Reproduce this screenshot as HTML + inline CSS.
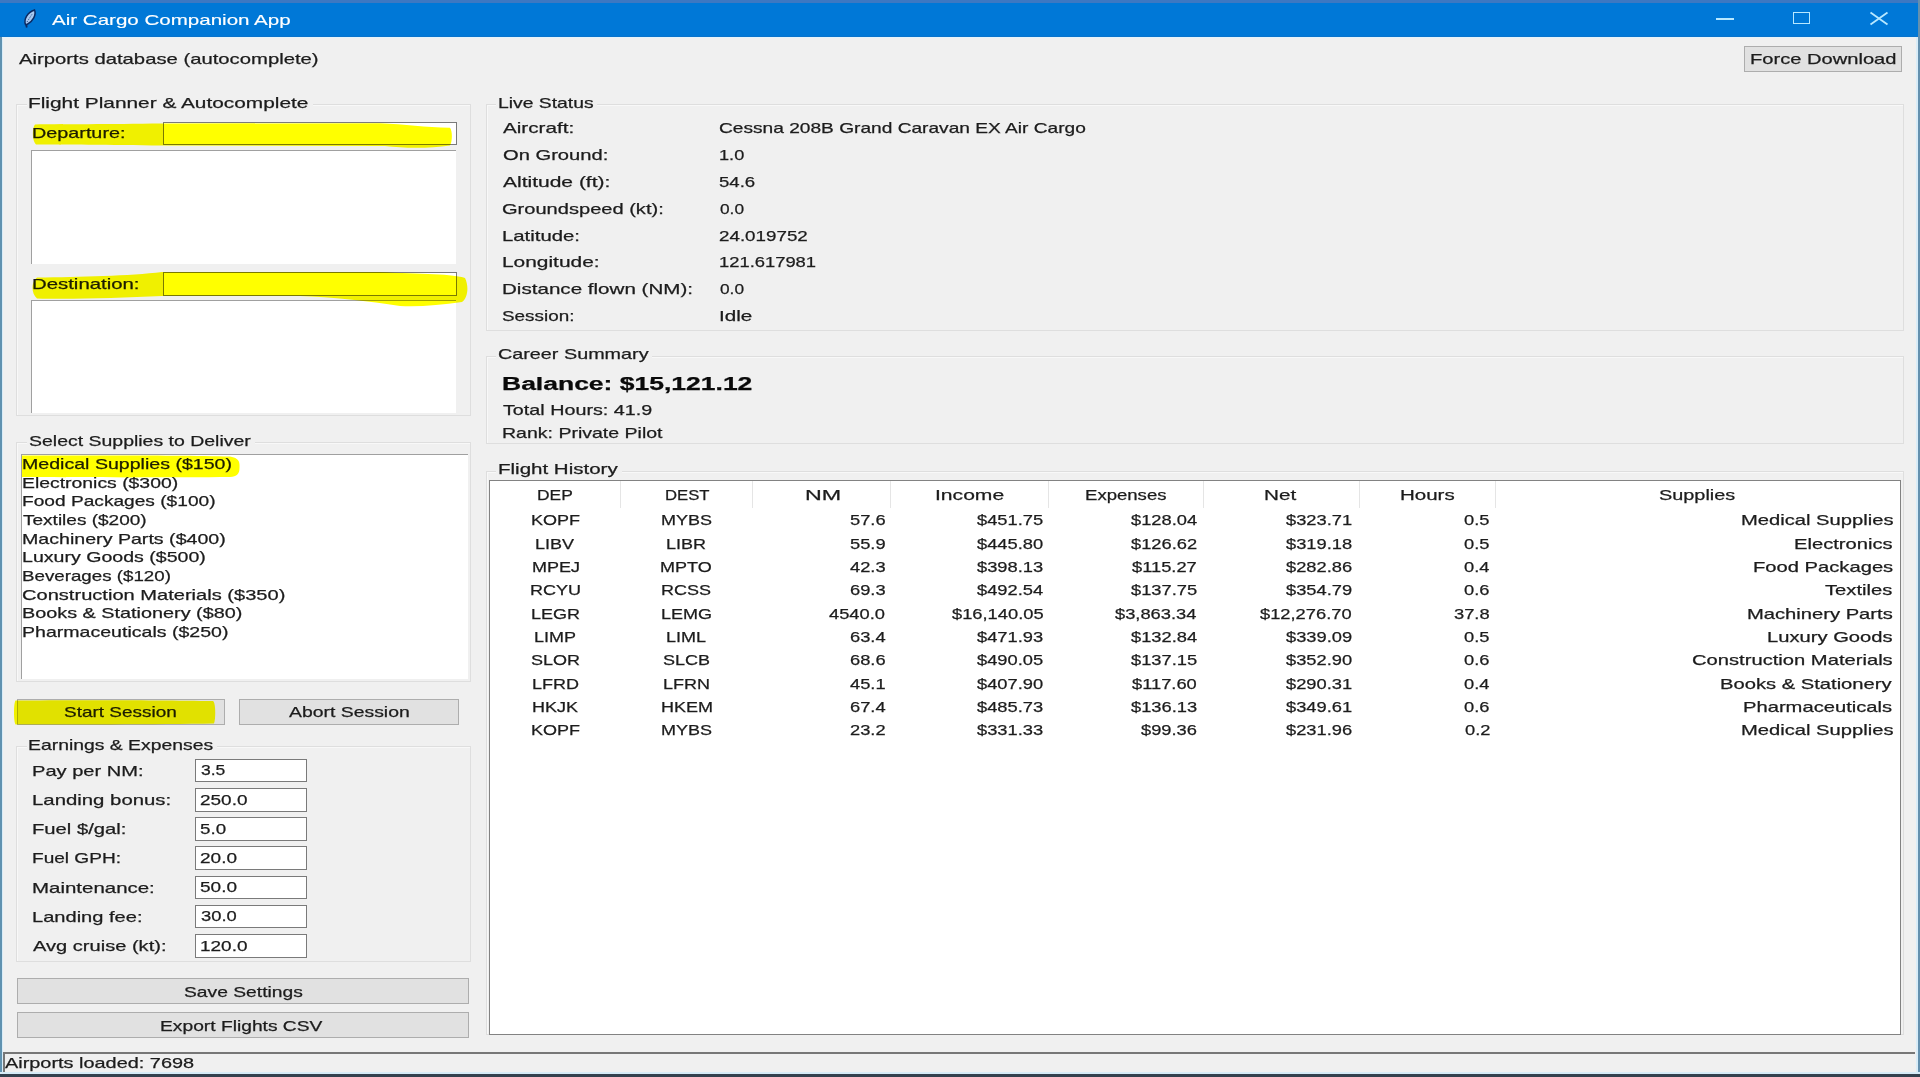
<!DOCTYPE html><html><head><meta charset="utf-8"><style>
html,body{margin:0;padding:0;}
body{width:1920px;height:1077px;overflow:hidden;position:relative;background:#f0f0f0;font-family:"Liberation Sans",sans-serif;}
.t{position:absolute;white-space:pre;transform-origin:0 0;}
.r{position:absolute;box-sizing:border-box;}
</style></head><body>
<div class="r" style="left:0.00px;top:0.00px;width:2.00px;height:1077.00px;background:#6092b0"></div>
<div class="r" style="left:2.00px;top:37.00px;width:1.00px;height:1037.00px;background:#d8ecf8"></div>
<div class="r" style="left:1918.00px;top:0.00px;width:2.00px;height:1077.00px;background:#6490ae"></div>
<div class="r" style="left:1916.00px;top:37.00px;width:2.00px;height:1037.00px;background:#d8ecf8"></div>
<div class="r" style="left:0.00px;top:1072.00px;width:1920.00px;height:2.00px;background:#d6ebf7"></div>
<div class="r" style="left:0.00px;top:1074.00px;width:1920.00px;height:3.00px;background:#33414e"></div>
<div class="r" style="left:0.00px;top:0.00px;width:1918.00px;height:37.00px;background:#0078d7"></div>
<div class="r" style="left:0.00px;top:0.00px;width:1918.00px;height:2.50px;background:#3d78c2"></div>
<div class="r" style="left:2.00px;top:37.00px;width:1914.00px;height:1.00px;background:#e4f3fb"></div>
<div class="r" style="left:0.00px;top:35.50px;width:1918.00px;height:1.50px;background:#0873cc"></div>
<div class="t" style="left:51.70px;top:12px;font-size:15px;line-height:15px;transform:scaleX(1.3695);font-weight:normal;color:#ffffff;-webkit-text-stroke:0.15px #ffffff">Air Cargo Companion App</div>
<svg style="position:absolute;left:14px;top:4px" width="32" height="28" viewBox="0 0 32 28"><path d="M11.5 20.5 C9.5 15.5 13.5 8 20.5 6 C22.5 10.5 19 17.5 13 20.5 Z" fill="#a9c9f0" stroke="#0b2a62" stroke-width="1.5"/><path d="M12 20 L12.8 23.5" stroke="#0b2a62" stroke-width="1.8"/><path d="M13 18 L18.5 9.5" stroke="#1d4a8a" stroke-width="0.9" stroke-dasharray="1.3 1.3"/></svg>
<div class="r" style="left:1716.00px;top:17.80px;width:18.00px;height:2.00px;background:#b8e8ff"></div>
<div class="r" style="left:1792.50px;top:12.30px;width:17.50px;height:12.00px;border:1.7px solid #b8e8ff"></div>
<svg style="position:absolute;left:1868px;top:10px" width="22" height="17" viewBox="0 0 22 17"><path d="M2.5 2.5 L19.5 14.5 M19.5 2.5 L2.5 14.5" stroke="#b8e8ff" stroke-width="1.8"/></svg>
<div class="t" style="left:19.00px;top:51px;font-size:15px;line-height:15px;transform:scaleX(1.3507);font-weight:normal;color:#1c1c1c;-webkit-text-stroke:0.25px #1c1c1c">Airports database (autocomplete)</div>
<div class="r" style="left:1743.50px;top:45.50px;width:158.90px;height:26.00px;background:#e1e1e1;border:1px solid #adadad"></div>
<div class="t" style="left:1749.96px;top:51px;font-size:15px;line-height:15px;transform:scaleX(1.3407);font-weight:normal;color:#1c1c1c;-webkit-text-stroke:0.25px #1c1c1c">Force Download</div>
<div class="r" style="left:16.00px;top:104.40px;width:455.00px;height:312.10px;border:1px solid #dedede;box-shadow:inset 1px 1px 0 #f8f8f8"></div>
<div class="r" style="left:26.70px;top:102.40px;width:286.30px;height:5.00px;background:#f0f0f0"></div>
<div class="t" style="left:28.31px;top:95px;font-size:15px;line-height:15px;transform:scaleX(1.3896);font-weight:normal;color:#1c1c1c;-webkit-text-stroke:0.25px #1c1c1c">Flight Planner &amp; Autocomplete</div>
<div class="r" style="left:16.00px;top:442.00px;width:455.00px;height:239.50px;border:1px solid #dedede;box-shadow:inset 1px 1px 0 #f8f8f8"></div>
<div class="r" style="left:27.00px;top:440.00px;width:227.60px;height:5.00px;background:#f0f0f0"></div>
<div class="t" style="left:28.70px;top:433px;font-size:15px;line-height:15px;transform:scaleX(1.2976);font-weight:normal;color:#1c1c1c;-webkit-text-stroke:0.25px #1c1c1c">Select Supplies to Deliver</div>
<div class="r" style="left:16.00px;top:745.80px;width:455.00px;height:216.20px;border:1px solid #dedede;box-shadow:inset 1px 1px 0 #f8f8f8"></div>
<div class="r" style="left:26.70px;top:743.80px;width:190.30px;height:5.00px;background:#f0f0f0"></div>
<div class="t" style="left:28.41px;top:737px;font-size:15px;line-height:15px;transform:scaleX(1.2908);font-weight:normal;color:#1c1c1c;-webkit-text-stroke:0.25px #1c1c1c">Earnings &amp; Expenses</div>
<div class="r" style="left:486.00px;top:104.00px;width:1417.80px;height:226.50px;border:1px solid #dedede;box-shadow:inset 1px 1px 0 #f8f8f8"></div>
<div class="r" style="left:496.00px;top:102.00px;width:101.00px;height:5.00px;background:#f0f0f0"></div>
<div class="t" style="left:497.71px;top:95px;font-size:15px;line-height:15px;transform:scaleX(1.2877);font-weight:normal;color:#1c1c1c;-webkit-text-stroke:0.25px #1c1c1c">Live Status</div>
<div class="r" style="left:486.00px;top:355.80px;width:1417.80px;height:88.70px;border:1px solid #dedede;box-shadow:inset 1px 1px 0 #f8f8f8"></div>
<div class="r" style="left:496.00px;top:353.80px;width:156.00px;height:5.00px;background:#f0f0f0"></div>
<div class="t" style="left:497.68px;top:346px;font-size:15px;line-height:15px;transform:scaleX(1.3186);font-weight:normal;color:#1c1c1c;-webkit-text-stroke:0.25px #1c1c1c">Career Summary</div>
<div class="r" style="left:486.00px;top:470.80px;width:1417.80px;height:564.70px;border:1px solid #dedede;box-shadow:inset 1px 1px 0 #f8f8f8"></div>
<div class="r" style="left:496.00px;top:468.80px;width:126.00px;height:5.00px;background:#f0f0f0"></div>
<div class="t" style="left:497.63px;top:461px;font-size:15px;line-height:15px;transform:scaleX(1.3678);font-weight:normal;color:#1c1c1c;-webkit-text-stroke:0.25px #1c1c1c">Flight History</div>
<div class="t" style="left:31.68px;top:125px;font-size:15px;line-height:15px;transform:scaleX(1.3188);font-weight:normal;color:#1c1c1c;-webkit-text-stroke:0.25px #1c1c1c">Departure:</div>
<div class="r" style="left:163.00px;top:121.50px;width:294.00px;height:23.50px;background:#fff;border:1px solid #7a7a7a"></div>
<div class="r" style="left:31.00px;top:149.50px;width:424.60px;height:114.00px;background:#fff;border-top:1.5px solid #a0a0a0;border-left:1.5px solid #a0a0a0"></div>
<div class="t" style="left:31.64px;top:276px;font-size:15px;line-height:15px;transform:scaleX(1.3571);font-weight:normal;color:#1c1c1c;-webkit-text-stroke:0.25px #1c1c1c">Destination:</div>
<div class="r" style="left:163.00px;top:272.00px;width:294.00px;height:23.60px;background:#fff;border:1px solid #7a7a7a"></div>
<div class="r" style="left:31.00px;top:300.40px;width:424.60px;height:112.60px;background:#fff;border-top:1.5px solid #a0a0a0;border-left:1.5px solid #a0a0a0"></div>
<div class="r" style="left:20.50px;top:453.50px;width:447.50px;height:225.50px;background:#fff;border-top:1.5px solid #a0a0a0;border-left:1.5px solid #a0a0a0"></div>
<div class="t" style="left:21.69px;top:456px;font-size:15px;line-height:15px;transform:scaleX(1.3050);font-weight:normal;color:#1c1c1c;-webkit-text-stroke:0.25px #1c1c1c">Medical Supplies ($150)</div>
<div class="t" style="left:21.71px;top:475px;font-size:15px;line-height:15px;transform:scaleX(1.2916);font-weight:normal;color:#1c1c1c;-webkit-text-stroke:0.25px #1c1c1c">Electronics ($300)</div>
<div class="t" style="left:21.72px;top:493px;font-size:15px;line-height:15px;transform:scaleX(1.2753);font-weight:normal;color:#1c1c1c;-webkit-text-stroke:0.25px #1c1c1c">Food Packages ($100)</div>
<div class="t" style="left:23.00px;top:512px;font-size:15px;line-height:15px;transform:scaleX(1.2680);font-weight:normal;color:#1c1c1c;-webkit-text-stroke:0.25px #1c1c1c">Textiles ($200)</div>
<div class="t" style="left:21.69px;top:531px;font-size:15px;line-height:15px;transform:scaleX(1.3071);font-weight:normal;color:#1c1c1c;-webkit-text-stroke:0.25px #1c1c1c">Machinery Parts ($400)</div>
<div class="t" style="left:21.70px;top:549px;font-size:15px;line-height:15px;transform:scaleX(1.3043);font-weight:normal;color:#1c1c1c;-webkit-text-stroke:0.25px #1c1c1c">Luxury Goods ($500)</div>
<div class="t" style="left:21.75px;top:568px;font-size:15px;line-height:15px;transform:scaleX(1.2492);font-weight:normal;color:#1c1c1c;-webkit-text-stroke:0.25px #1c1c1c">Beverages ($120)</div>
<div class="t" style="left:21.66px;top:587px;font-size:15px;line-height:15px;transform:scaleX(1.3385);font-weight:normal;color:#1c1c1c;-webkit-text-stroke:0.25px #1c1c1c">Construction Materials ($350)</div>
<div class="t" style="left:21.68px;top:605px;font-size:15px;line-height:15px;transform:scaleX(1.3212);font-weight:normal;color:#1c1c1c;-webkit-text-stroke:0.25px #1c1c1c">Books &amp; Stationery ($80)</div>
<div class="t" style="left:21.70px;top:624px;font-size:15px;line-height:15px;transform:scaleX(1.3032);font-weight:normal;color:#1c1c1c;-webkit-text-stroke:0.25px #1c1c1c">Pharmaceuticals ($250)</div>
<div class="r" style="left:17.00px;top:698.50px;width:208.00px;height:26.50px;background:#e1e1e1;border:1px solid #adadad"></div>
<div class="t" style="left:63.74px;top:704px;font-size:15px;line-height:15px;transform:scaleX(1.2644);font-weight:normal;color:#1c1c1c;-webkit-text-stroke:0.25px #1c1c1c">Start Session</div>
<div class="r" style="left:239.00px;top:698.50px;width:219.75px;height:26.50px;background:#e1e1e1;border:1px solid #adadad"></div>
<div class="t" style="left:288.77px;top:704px;font-size:15px;line-height:15px;transform:scaleX(1.2930);font-weight:normal;color:#1c1c1c;-webkit-text-stroke:0.25px #1c1c1c">Abort Session</div>
<div class="t" style="left:31.96px;top:763px;font-size:15px;line-height:15px;transform:scaleX(1.3383);font-weight:normal;color:#1c1c1c;-webkit-text-stroke:0.25px #1c1c1c">Pay per NM:</div>
<div class="r" style="left:195.30px;top:758.70px;width:111.70px;height:23.80px;background:#fff;border:1px solid #7a7a7a"></div>
<div class="t" style="left:200.80px;top:762px;font-size:15px;line-height:15px;transform:scaleX(1.1667);font-weight:normal;color:#1c1c1c;-webkit-text-stroke:0.25px #1c1c1c">3.5</div>
<div class="t" style="left:31.94px;top:792px;font-size:15px;line-height:15px;transform:scaleX(1.3564);font-weight:normal;color:#1c1c1c;-webkit-text-stroke:0.25px #1c1c1c">Landing bonus:</div>
<div class="r" style="left:195.30px;top:787.90px;width:111.70px;height:23.80px;background:#fff;border:1px solid #7a7a7a"></div>
<div class="t" style="left:199.54px;top:792px;font-size:15px;line-height:15px;transform:scaleX(1.2639);font-weight:normal;color:#1c1c1c;-webkit-text-stroke:0.25px #1c1c1c">250.0</div>
<div class="t" style="left:31.95px;top:821px;font-size:15px;line-height:15px;transform:scaleX(1.3485);font-weight:normal;color:#1c1c1c;-webkit-text-stroke:0.25px #1c1c1c">Fuel $/gal:</div>
<div class="r" style="left:195.30px;top:817.10px;width:111.70px;height:23.80px;background:#fff;border:1px solid #7a7a7a"></div>
<div class="t" style="left:199.55px;top:821px;font-size:15px;line-height:15px;transform:scaleX(1.2500);font-weight:normal;color:#1c1c1c;-webkit-text-stroke:0.25px #1c1c1c">5.0</div>
<div class="t" style="left:32.03px;top:850px;font-size:15px;line-height:15px;transform:scaleX(1.2706);font-weight:normal;color:#1c1c1c;-webkit-text-stroke:0.25px #1c1c1c">Fuel GPH:</div>
<div class="r" style="left:195.30px;top:846.30px;width:111.70px;height:23.80px;background:#fff;border:1px solid #7a7a7a"></div>
<div class="t" style="left:199.53px;top:850px;font-size:15px;line-height:15px;transform:scaleX(1.2679);font-weight:normal;color:#1c1c1c;-webkit-text-stroke:0.25px #1c1c1c">20.0</div>
<div class="t" style="left:31.94px;top:880px;font-size:15px;line-height:15px;transform:scaleX(1.3636);font-weight:normal;color:#1c1c1c;-webkit-text-stroke:0.25px #1c1c1c">Maintenance:</div>
<div class="r" style="left:195.30px;top:875.50px;width:111.70px;height:23.80px;background:#fff;border:1px solid #7a7a7a"></div>
<div class="t" style="left:199.53px;top:879px;font-size:15px;line-height:15px;transform:scaleX(1.2679);font-weight:normal;color:#1c1c1c;-webkit-text-stroke:0.25px #1c1c1c">50.0</div>
<div class="t" style="left:31.96px;top:909px;font-size:15px;line-height:15px;transform:scaleX(1.3383);font-weight:normal;color:#1c1c1c;-webkit-text-stroke:0.25px #1c1c1c">Landing fee:</div>
<div class="r" style="left:195.30px;top:904.70px;width:111.70px;height:23.80px;background:#fff;border:1px solid #7a7a7a"></div>
<div class="t" style="left:200.80px;top:908px;font-size:15px;line-height:15px;transform:scaleX(1.2241);font-weight:normal;color:#1c1c1c;-webkit-text-stroke:0.25px #1c1c1c">30.0</div>
<div class="t" style="left:33.30px;top:938px;font-size:15px;line-height:15px;transform:scaleX(1.3384);font-weight:normal;color:#1c1c1c;-webkit-text-stroke:0.25px #1c1c1c">Avg cruise (kt):</div>
<div class="r" style="left:195.30px;top:933.90px;width:111.70px;height:23.80px;background:#fff;border:1px solid #7a7a7a"></div>
<div class="t" style="left:199.54px;top:938px;font-size:15px;line-height:15px;transform:scaleX(1.2639);font-weight:normal;color:#1c1c1c;-webkit-text-stroke:0.25px #1c1c1c">120.0</div>
<div class="r" style="left:16.70px;top:978.30px;width:452.30px;height:26.10px;background:#e1e1e1;border:1px solid #adadad"></div>
<div class="t" style="left:183.92px;top:984px;font-size:15px;line-height:15px;transform:scaleX(1.2835);font-weight:normal;color:#1c1c1c;-webkit-text-stroke:0.25px #1c1c1c">Save Settings</div>
<div class="r" style="left:16.70px;top:1012.00px;width:452.30px;height:26.30px;background:#e1e1e1;border:1px solid #adadad"></div>
<div class="t" style="left:160.47px;top:1018px;font-size:15px;line-height:15px;transform:scaleX(1.2817);font-weight:normal;color:#1c1c1c;-webkit-text-stroke:0.25px #1c1c1c">Export Flights CSV</div>
<div class="r" style="left:3.00px;top:1052.00px;width:1912.00px;height:2.00px;background:#777777"></div>
<div class="r" style="left:3.30px;top:1052.00px;width:1.50px;height:20.00px;background:#777777"></div>
<div class="t" style="left:5.00px;top:1055px;font-size:15px;line-height:15px;transform:scaleX(1.3261);font-weight:normal;color:#1c1c1c;-webkit-text-stroke:0.25px #1c1c1c">Airports loaded: 7698</div>
<div class="t" style="left:503.00px;top:120px;font-size:15px;line-height:15px;transform:scaleX(1.3765);font-weight:normal;color:#1c1c1c;-webkit-text-stroke:0.25px #1c1c1c">Aircraft:</div>
<div class="t" style="left:718.72px;top:120px;font-size:15px;line-height:15px;transform:scaleX(1.2752);font-weight:normal;color:#1c1c1c;-webkit-text-stroke:0.25px #1c1c1c">Cessna 208B Grand Caravan EX Air Cargo</div>
<div class="t" style="left:503.00px;top:147px;font-size:15px;line-height:15px;transform:scaleX(1.3429);font-weight:normal;color:#1c1c1c;-webkit-text-stroke:0.25px #1c1c1c">On Ground:</div>
<div class="t" style="left:718.79px;top:147px;font-size:15px;line-height:15px;transform:scaleX(1.2100);font-weight:normal;color:#1c1c1c;-webkit-text-stroke:0.25px #1c1c1c">1.0</div>
<div class="t" style="left:503.00px;top:174px;font-size:15px;line-height:15px;transform:scaleX(1.4000);font-weight:normal;color:#1c1c1c;-webkit-text-stroke:0.25px #1c1c1c">Altitude (ft):</div>
<div class="t" style="left:718.76px;top:174px;font-size:15px;line-height:15px;transform:scaleX(1.2393);font-weight:normal;color:#1c1c1c;-webkit-text-stroke:0.25px #1c1c1c">54.6</div>
<div class="t" style="left:501.66px;top:201px;font-size:15px;line-height:15px;transform:scaleX(1.3378);font-weight:normal;color:#1c1c1c;-webkit-text-stroke:0.25px #1c1c1c">Groundspeed (kt):</div>
<div class="t" style="left:720.00px;top:201px;font-size:15px;line-height:15px;transform:scaleX(1.1524);font-weight:normal;color:#1c1c1c;-webkit-text-stroke:0.25px #1c1c1c">0.0</div>
<div class="t" style="left:501.64px;top:228px;font-size:15px;line-height:15px;transform:scaleX(1.3554);font-weight:normal;color:#1c1c1c;-webkit-text-stroke:0.25px #1c1c1c">Latitude:</div>
<div class="t" style="left:718.75px;top:228px;font-size:15px;line-height:15px;transform:scaleX(1.2522);font-weight:normal;color:#1c1c1c;-webkit-text-stroke:0.25px #1c1c1c">24.019752</div>
<div class="t" style="left:501.61px;top:254px;font-size:15px;line-height:15px;transform:scaleX(1.3926);font-weight:normal;color:#1c1c1c;-webkit-text-stroke:0.25px #1c1c1c">Longitude:</div>
<div class="t" style="left:718.78px;top:254px;font-size:15px;line-height:15px;transform:scaleX(1.2244);font-weight:normal;color:#1c1c1c;-webkit-text-stroke:0.25px #1c1c1c">121.617981</div>
<div class="t" style="left:501.63px;top:281px;font-size:15px;line-height:15px;transform:scaleX(1.3723);font-weight:normal;color:#1c1c1c;-webkit-text-stroke:0.25px #1c1c1c">Distance flown (NM):</div>
<div class="t" style="left:720.00px;top:281px;font-size:15px;line-height:15px;transform:scaleX(1.1524);font-weight:normal;color:#1c1c1c;-webkit-text-stroke:0.25px #1c1c1c">0.0</div>
<div class="t" style="left:501.74px;top:308px;font-size:15px;line-height:15px;transform:scaleX(1.2582);font-weight:normal;color:#1c1c1c;-webkit-text-stroke:0.25px #1c1c1c">Session:</div>
<div class="t" style="left:718.62px;top:308px;font-size:15px;line-height:15px;transform:scaleX(1.3783);font-weight:normal;color:#1c1c1c;-webkit-text-stroke:0.25px #1c1c1c">Idle</div>
<div class="t" style="left:501.53px;top:375px;font-size:18px;line-height:18px;transform:scaleX(1.4716);font-weight:bold;color:#0a0a0a;-webkit-text-stroke:0.25px #0a0a0a">Balance: $15,121.12</div>
<div class="t" style="left:503.00px;top:402px;font-size:15px;line-height:15px;transform:scaleX(1.3159);font-weight:normal;color:#1c1c1c;-webkit-text-stroke:0.25px #1c1c1c">Total Hours: 41.9</div>
<div class="t" style="left:501.70px;top:425px;font-size:15px;line-height:15px;transform:scaleX(1.3008);font-weight:normal;color:#1c1c1c;-webkit-text-stroke:0.25px #1c1c1c">Rank: Private Pilot</div>
<div class="r" style="left:489.00px;top:480.00px;width:1412.00px;height:555.00px;background:#fff;border:1px solid #828282"></div>
<div class="r" style="left:619.50px;top:481.00px;width:1.00px;height:27.00px;background:#e5e5e5"></div>
<div class="r" style="left:752.00px;top:481.00px;width:1.00px;height:27.00px;background:#e5e5e5"></div>
<div class="r" style="left:890.30px;top:481.00px;width:1.00px;height:27.00px;background:#e5e5e5"></div>
<div class="r" style="left:1047.80px;top:481.00px;width:1.00px;height:27.00px;background:#e5e5e5"></div>
<div class="r" style="left:1202.80px;top:481.00px;width:1.00px;height:27.00px;background:#e5e5e5"></div>
<div class="r" style="left:1358.70px;top:481.00px;width:1.00px;height:27.00px;background:#e5e5e5"></div>
<div class="r" style="left:1494.50px;top:481.00px;width:1.00px;height:27.00px;background:#e5e5e5"></div>
<div class="t" style="left:536.99px;top:487px;font-size:15px;line-height:15px;transform:scaleX(1.1621);font-weight:normal;color:#1c1c1c;-webkit-text-stroke:0.25px #1c1c1c">DEP</div>
<div class="t" style="left:664.69px;top:487px;font-size:15px;line-height:15px;transform:scaleX(1.1128);font-weight:normal;color:#1c1c1c;-webkit-text-stroke:0.25px #1c1c1c">DEST</div>
<div class="t" style="left:805.20px;top:487px;font-size:15px;line-height:15px;transform:scaleX(1.5476);font-weight:normal;color:#1c1c1c;-webkit-text-stroke:0.25px #1c1c1c">NM</div>
<div class="t" style="left:935.34px;top:487px;font-size:15px;line-height:15px;transform:scaleX(1.4062);font-weight:normal;color:#1c1c1c;-webkit-text-stroke:0.25px #1c1c1c">Income</div>
<div class="t" style="left:1085.06px;top:487px;font-size:15px;line-height:15px;transform:scaleX(1.2369);font-weight:normal;color:#1c1c1c;-webkit-text-stroke:0.25px #1c1c1c">Expenses</div>
<div class="t" style="left:1264.47px;top:487px;font-size:15px;line-height:15px;transform:scaleX(1.3783);font-weight:normal;color:#1c1c1c;-webkit-text-stroke:0.25px #1c1c1c">Net</div>
<div class="t" style="left:1400.28px;top:487px;font-size:15px;line-height:15px;transform:scaleX(1.3667);font-weight:normal;color:#1c1c1c;-webkit-text-stroke:0.25px #1c1c1c">Hours</div>
<div class="t" style="left:1659.48px;top:487px;font-size:15px;line-height:15px;transform:scaleX(1.3250);font-weight:normal;color:#1c1c1c;-webkit-text-stroke:0.25px #1c1c1c">Supplies</div>
<div class="t" style="left:530.50px;top:512px;font-size:15px;line-height:15px;transform:scaleX(1.2000);font-weight:normal;color:#1c1c1c;-webkit-text-stroke:0.25px #1c1c1c">KOPF</div>
<div class="t" style="left:660.80px;top:512px;font-size:15px;line-height:15px;transform:scaleX(1.2000);font-weight:normal;color:#1c1c1c;-webkit-text-stroke:0.25px #1c1c1c">MYBS</div>
<div class="t" style="left:849.92px;top:512px;font-size:15px;line-height:15px;transform:scaleX(1.2200);font-weight:normal;color:#1c1c1c;-webkit-text-stroke:0.25px #1c1c1c">57.6</div>
<div class="t" style="left:977.12px;top:512px;font-size:15px;line-height:15px;transform:scaleX(1.2200);font-weight:normal;color:#1c1c1c;-webkit-text-stroke:0.25px #1c1c1c">$451.75</div>
<div class="t" style="left:1130.82px;top:512px;font-size:15px;line-height:15px;transform:scaleX(1.2200);font-weight:normal;color:#1c1c1c;-webkit-text-stroke:0.25px #1c1c1c">$128.04</div>
<div class="t" style="left:1285.82px;top:512px;font-size:15px;line-height:15px;transform:scaleX(1.2200);font-weight:normal;color:#1c1c1c;-webkit-text-stroke:0.25px #1c1c1c">$323.71</div>
<div class="t" style="left:1463.58px;top:512px;font-size:15px;line-height:15px;transform:scaleX(1.2200);font-weight:normal;color:#1c1c1c;-webkit-text-stroke:0.25px #1c1c1c">0.5</div>
<div class="t" style="left:1740.52px;top:512px;font-size:15px;line-height:15px;transform:scaleX(1.3450);font-weight:normal;color:#1c1c1c;-webkit-text-stroke:0.25px #1c1c1c">Medical Supplies</div>
<div class="t" style="left:535.30px;top:536px;font-size:15px;line-height:15px;transform:scaleX(1.2000);font-weight:normal;color:#1c1c1c;-webkit-text-stroke:0.25px #1c1c1c">LIBV</div>
<div class="t" style="left:666.20px;top:536px;font-size:15px;line-height:15px;transform:scaleX(1.2000);font-weight:normal;color:#1c1c1c;-webkit-text-stroke:0.25px #1c1c1c">LIBR</div>
<div class="t" style="left:849.92px;top:536px;font-size:15px;line-height:15px;transform:scaleX(1.2200);font-weight:normal;color:#1c1c1c;-webkit-text-stroke:0.25px #1c1c1c">55.9</div>
<div class="t" style="left:977.12px;top:536px;font-size:15px;line-height:15px;transform:scaleX(1.2200);font-weight:normal;color:#1c1c1c;-webkit-text-stroke:0.25px #1c1c1c">$445.80</div>
<div class="t" style="left:1130.82px;top:536px;font-size:15px;line-height:15px;transform:scaleX(1.2200);font-weight:normal;color:#1c1c1c;-webkit-text-stroke:0.25px #1c1c1c">$126.62</div>
<div class="t" style="left:1285.82px;top:536px;font-size:15px;line-height:15px;transform:scaleX(1.2200);font-weight:normal;color:#1c1c1c;-webkit-text-stroke:0.25px #1c1c1c">$319.18</div>
<div class="t" style="left:1463.58px;top:536px;font-size:15px;line-height:15px;transform:scaleX(1.2200);font-weight:normal;color:#1c1c1c;-webkit-text-stroke:0.25px #1c1c1c">0.5</div>
<div class="t" style="left:1794.32px;top:536px;font-size:15px;line-height:15px;transform:scaleX(1.3450);font-weight:normal;color:#1c1c1c;-webkit-text-stroke:0.25px #1c1c1c">Electronics</div>
<div class="t" style="left:531.70px;top:559px;font-size:15px;line-height:15px;transform:scaleX(1.2000);font-weight:normal;color:#1c1c1c;-webkit-text-stroke:0.25px #1c1c1c">MPEJ</div>
<div class="t" style="left:660.20px;top:559px;font-size:15px;line-height:15px;transform:scaleX(1.2000);font-weight:normal;color:#1c1c1c;-webkit-text-stroke:0.25px #1c1c1c">MPTO</div>
<div class="t" style="left:849.92px;top:559px;font-size:15px;line-height:15px;transform:scaleX(1.2200);font-weight:normal;color:#1c1c1c;-webkit-text-stroke:0.25px #1c1c1c">42.3</div>
<div class="t" style="left:977.12px;top:559px;font-size:15px;line-height:15px;transform:scaleX(1.2200);font-weight:normal;color:#1c1c1c;-webkit-text-stroke:0.25px #1c1c1c">$398.13</div>
<div class="t" style="left:1132.04px;top:559px;font-size:15px;line-height:15px;transform:scaleX(1.2200);font-weight:normal;color:#1c1c1c;-webkit-text-stroke:0.25px #1c1c1c">$115.27</div>
<div class="t" style="left:1285.82px;top:559px;font-size:15px;line-height:15px;transform:scaleX(1.2200);font-weight:normal;color:#1c1c1c;-webkit-text-stroke:0.25px #1c1c1c">$282.86</div>
<div class="t" style="left:1463.58px;top:559px;font-size:15px;line-height:15px;transform:scaleX(1.2200);font-weight:normal;color:#1c1c1c;-webkit-text-stroke:0.25px #1c1c1c">0.4</div>
<div class="t" style="left:1752.62px;top:559px;font-size:15px;line-height:15px;transform:scaleX(1.3450);font-weight:normal;color:#1c1c1c;-webkit-text-stroke:0.25px #1c1c1c">Food Packages</div>
<div class="t" style="left:529.90px;top:582px;font-size:15px;line-height:15px;transform:scaleX(1.2000);font-weight:normal;color:#1c1c1c;-webkit-text-stroke:0.25px #1c1c1c">RCYU</div>
<div class="t" style="left:661.40px;top:582px;font-size:15px;line-height:15px;transform:scaleX(1.2000);font-weight:normal;color:#1c1c1c;-webkit-text-stroke:0.25px #1c1c1c">RCSS</div>
<div class="t" style="left:849.92px;top:582px;font-size:15px;line-height:15px;transform:scaleX(1.2200);font-weight:normal;color:#1c1c1c;-webkit-text-stroke:0.25px #1c1c1c">69.3</div>
<div class="t" style="left:977.12px;top:582px;font-size:15px;line-height:15px;transform:scaleX(1.2200);font-weight:normal;color:#1c1c1c;-webkit-text-stroke:0.25px #1c1c1c">$492.54</div>
<div class="t" style="left:1130.82px;top:582px;font-size:15px;line-height:15px;transform:scaleX(1.2200);font-weight:normal;color:#1c1c1c;-webkit-text-stroke:0.25px #1c1c1c">$137.75</div>
<div class="t" style="left:1285.82px;top:582px;font-size:15px;line-height:15px;transform:scaleX(1.2200);font-weight:normal;color:#1c1c1c;-webkit-text-stroke:0.25px #1c1c1c">$354.79</div>
<div class="t" style="left:1463.58px;top:582px;font-size:15px;line-height:15px;transform:scaleX(1.2200);font-weight:normal;color:#1c1c1c;-webkit-text-stroke:0.25px #1c1c1c">0.6</div>
<div class="t" style="left:1825.25px;top:582px;font-size:15px;line-height:15px;transform:scaleX(1.3450);font-weight:normal;color:#1c1c1c;-webkit-text-stroke:0.25px #1c1c1c">Textiles</div>
<div class="t" style="left:531.10px;top:606px;font-size:15px;line-height:15px;transform:scaleX(1.2000);font-weight:normal;color:#1c1c1c;-webkit-text-stroke:0.25px #1c1c1c">LEGR</div>
<div class="t" style="left:660.80px;top:606px;font-size:15px;line-height:15px;transform:scaleX(1.2000);font-weight:normal;color:#1c1c1c;-webkit-text-stroke:0.25px #1c1c1c">LEMG</div>
<div class="t" style="left:829.18px;top:606px;font-size:15px;line-height:15px;transform:scaleX(1.2200);font-weight:normal;color:#1c1c1c;-webkit-text-stroke:0.25px #1c1c1c">4540.0</div>
<div class="t" style="left:951.50px;top:606px;font-size:15px;line-height:15px;transform:scaleX(1.2200);font-weight:normal;color:#1c1c1c;-webkit-text-stroke:0.25px #1c1c1c">$16,140.05</div>
<div class="t" style="left:1114.96px;top:606px;font-size:15px;line-height:15px;transform:scaleX(1.2200);font-weight:normal;color:#1c1c1c;-webkit-text-stroke:0.25px #1c1c1c">$3,863.34</div>
<div class="t" style="left:1260.20px;top:606px;font-size:15px;line-height:15px;transform:scaleX(1.2200);font-weight:normal;color:#1c1c1c;-webkit-text-stroke:0.25px #1c1c1c">$12,276.70</div>
<div class="t" style="left:1453.82px;top:606px;font-size:15px;line-height:15px;transform:scaleX(1.2200);font-weight:normal;color:#1c1c1c;-webkit-text-stroke:0.25px #1c1c1c">37.8</div>
<div class="t" style="left:1747.24px;top:606px;font-size:15px;line-height:15px;transform:scaleX(1.3450);font-weight:normal;color:#1c1c1c;-webkit-text-stroke:0.25px #1c1c1c">Machinery Parts</div>
<div class="t" style="left:534.10px;top:629px;font-size:15px;line-height:15px;transform:scaleX(1.2000);font-weight:normal;color:#1c1c1c;-webkit-text-stroke:0.25px #1c1c1c">LIMP</div>
<div class="t" style="left:666.20px;top:629px;font-size:15px;line-height:15px;transform:scaleX(1.2000);font-weight:normal;color:#1c1c1c;-webkit-text-stroke:0.25px #1c1c1c">LIML</div>
<div class="t" style="left:849.92px;top:629px;font-size:15px;line-height:15px;transform:scaleX(1.2200);font-weight:normal;color:#1c1c1c;-webkit-text-stroke:0.25px #1c1c1c">63.4</div>
<div class="t" style="left:977.12px;top:629px;font-size:15px;line-height:15px;transform:scaleX(1.2200);font-weight:normal;color:#1c1c1c;-webkit-text-stroke:0.25px #1c1c1c">$471.93</div>
<div class="t" style="left:1130.82px;top:629px;font-size:15px;line-height:15px;transform:scaleX(1.2200);font-weight:normal;color:#1c1c1c;-webkit-text-stroke:0.25px #1c1c1c">$132.84</div>
<div class="t" style="left:1285.82px;top:629px;font-size:15px;line-height:15px;transform:scaleX(1.2200);font-weight:normal;color:#1c1c1c;-webkit-text-stroke:0.25px #1c1c1c">$339.09</div>
<div class="t" style="left:1463.58px;top:629px;font-size:15px;line-height:15px;transform:scaleX(1.2200);font-weight:normal;color:#1c1c1c;-webkit-text-stroke:0.25px #1c1c1c">0.5</div>
<div class="t" style="left:1767.41px;top:629px;font-size:15px;line-height:15px;transform:scaleX(1.3450);font-weight:normal;color:#1c1c1c;-webkit-text-stroke:0.25px #1c1c1c">Luxury Goods</div>
<div class="t" style="left:531.10px;top:652px;font-size:15px;line-height:15px;transform:scaleX(1.2000);font-weight:normal;color:#1c1c1c;-webkit-text-stroke:0.25px #1c1c1c">SLOR</div>
<div class="t" style="left:662.60px;top:652px;font-size:15px;line-height:15px;transform:scaleX(1.2000);font-weight:normal;color:#1c1c1c;-webkit-text-stroke:0.25px #1c1c1c">SLCB</div>
<div class="t" style="left:849.92px;top:652px;font-size:15px;line-height:15px;transform:scaleX(1.2200);font-weight:normal;color:#1c1c1c;-webkit-text-stroke:0.25px #1c1c1c">68.6</div>
<div class="t" style="left:977.12px;top:652px;font-size:15px;line-height:15px;transform:scaleX(1.2200);font-weight:normal;color:#1c1c1c;-webkit-text-stroke:0.25px #1c1c1c">$490.05</div>
<div class="t" style="left:1130.82px;top:652px;font-size:15px;line-height:15px;transform:scaleX(1.2200);font-weight:normal;color:#1c1c1c;-webkit-text-stroke:0.25px #1c1c1c">$137.15</div>
<div class="t" style="left:1285.82px;top:652px;font-size:15px;line-height:15px;transform:scaleX(1.2200);font-weight:normal;color:#1c1c1c;-webkit-text-stroke:0.25px #1c1c1c">$352.90</div>
<div class="t" style="left:1463.58px;top:652px;font-size:15px;line-height:15px;transform:scaleX(1.2200);font-weight:normal;color:#1c1c1c;-webkit-text-stroke:0.25px #1c1c1c">0.6</div>
<div class="t" style="left:1692.10px;top:652px;font-size:15px;line-height:15px;transform:scaleX(1.3450);font-weight:normal;color:#1c1c1c;-webkit-text-stroke:0.25px #1c1c1c">Construction Materials</div>
<div class="t" style="left:531.70px;top:676px;font-size:15px;line-height:15px;transform:scaleX(1.2000);font-weight:normal;color:#1c1c1c;-webkit-text-stroke:0.25px #1c1c1c">LFRD</div>
<div class="t" style="left:663.20px;top:676px;font-size:15px;line-height:15px;transform:scaleX(1.2000);font-weight:normal;color:#1c1c1c;-webkit-text-stroke:0.25px #1c1c1c">LFRN</div>
<div class="t" style="left:849.92px;top:676px;font-size:15px;line-height:15px;transform:scaleX(1.2200);font-weight:normal;color:#1c1c1c;-webkit-text-stroke:0.25px #1c1c1c">45.1</div>
<div class="t" style="left:977.12px;top:676px;font-size:15px;line-height:15px;transform:scaleX(1.2200);font-weight:normal;color:#1c1c1c;-webkit-text-stroke:0.25px #1c1c1c">$407.90</div>
<div class="t" style="left:1132.04px;top:676px;font-size:15px;line-height:15px;transform:scaleX(1.2200);font-weight:normal;color:#1c1c1c;-webkit-text-stroke:0.25px #1c1c1c">$117.60</div>
<div class="t" style="left:1285.82px;top:676px;font-size:15px;line-height:15px;transform:scaleX(1.2200);font-weight:normal;color:#1c1c1c;-webkit-text-stroke:0.25px #1c1c1c">$290.31</div>
<div class="t" style="left:1463.58px;top:676px;font-size:15px;line-height:15px;transform:scaleX(1.2200);font-weight:normal;color:#1c1c1c;-webkit-text-stroke:0.25px #1c1c1c">0.4</div>
<div class="t" style="left:1720.34px;top:676px;font-size:15px;line-height:15px;transform:scaleX(1.3450);font-weight:normal;color:#1c1c1c;-webkit-text-stroke:0.25px #1c1c1c">Books &amp; Stationery</div>
<div class="t" style="left:532.30px;top:699px;font-size:15px;line-height:15px;transform:scaleX(1.2000);font-weight:normal;color:#1c1c1c;-webkit-text-stroke:0.25px #1c1c1c">HKJK</div>
<div class="t" style="left:660.80px;top:699px;font-size:15px;line-height:15px;transform:scaleX(1.2000);font-weight:normal;color:#1c1c1c;-webkit-text-stroke:0.25px #1c1c1c">HKEM</div>
<div class="t" style="left:849.92px;top:699px;font-size:15px;line-height:15px;transform:scaleX(1.2200);font-weight:normal;color:#1c1c1c;-webkit-text-stroke:0.25px #1c1c1c">67.4</div>
<div class="t" style="left:977.12px;top:699px;font-size:15px;line-height:15px;transform:scaleX(1.2200);font-weight:normal;color:#1c1c1c;-webkit-text-stroke:0.25px #1c1c1c">$485.73</div>
<div class="t" style="left:1130.82px;top:699px;font-size:15px;line-height:15px;transform:scaleX(1.2200);font-weight:normal;color:#1c1c1c;-webkit-text-stroke:0.25px #1c1c1c">$136.13</div>
<div class="t" style="left:1285.82px;top:699px;font-size:15px;line-height:15px;transform:scaleX(1.2200);font-weight:normal;color:#1c1c1c;-webkit-text-stroke:0.25px #1c1c1c">$349.61</div>
<div class="t" style="left:1463.58px;top:699px;font-size:15px;line-height:15px;transform:scaleX(1.2200);font-weight:normal;color:#1c1c1c;-webkit-text-stroke:0.25px #1c1c1c">0.6</div>
<div class="t" style="left:1743.20px;top:699px;font-size:15px;line-height:15px;transform:scaleX(1.3450);font-weight:normal;color:#1c1c1c;-webkit-text-stroke:0.25px #1c1c1c">Pharmaceuticals</div>
<div class="t" style="left:530.50px;top:722px;font-size:15px;line-height:15px;transform:scaleX(1.2000);font-weight:normal;color:#1c1c1c;-webkit-text-stroke:0.25px #1c1c1c">KOPF</div>
<div class="t" style="left:660.80px;top:722px;font-size:15px;line-height:15px;transform:scaleX(1.2000);font-weight:normal;color:#1c1c1c;-webkit-text-stroke:0.25px #1c1c1c">MYBS</div>
<div class="t" style="left:849.92px;top:722px;font-size:15px;line-height:15px;transform:scaleX(1.2200);font-weight:normal;color:#1c1c1c;-webkit-text-stroke:0.25px #1c1c1c">23.2</div>
<div class="t" style="left:977.12px;top:722px;font-size:15px;line-height:15px;transform:scaleX(1.2200);font-weight:normal;color:#1c1c1c;-webkit-text-stroke:0.25px #1c1c1c">$331.33</div>
<div class="t" style="left:1140.58px;top:722px;font-size:15px;line-height:15px;transform:scaleX(1.2200);font-weight:normal;color:#1c1c1c;-webkit-text-stroke:0.25px #1c1c1c">$99.36</div>
<div class="t" style="left:1285.82px;top:722px;font-size:15px;line-height:15px;transform:scaleX(1.2200);font-weight:normal;color:#1c1c1c;-webkit-text-stroke:0.25px #1c1c1c">$231.96</div>
<div class="t" style="left:1464.80px;top:722px;font-size:15px;line-height:15px;transform:scaleX(1.2200);font-weight:normal;color:#1c1c1c;-webkit-text-stroke:0.25px #1c1c1c">0.2</div>
<div class="t" style="left:1740.52px;top:722px;font-size:15px;line-height:15px;transform:scaleX(1.3450);font-weight:normal;color:#1c1c1c;-webkit-text-stroke:0.25px #1c1c1c">Medical Supplies</div>
<svg style="position:absolute;left:0;top:0;mix-blend-mode:multiply;filter:blur(0.6px)" width="1920" height="1077">
<g fill="#ffff00">
<path d="M35 124.4 C60 124.2 110 124.2 162 123.5 L380 123.2 C405 124 425 127.5 450 127.8 C452.5 131 452.5 141 450 145.5 C430 148.5 405 148.5 385 146 L162 145.5 C110 145 60 144.5 36 144.5 C32 141 32 128 35 124.4 Z"/>
<path d="M37 277.5 C80 277 130 276 162 272 L380 272 C420 274 455 274 465 278 C469 286 468 298 462 302 C440 305 420 307 400 306 C370 301 330 297 300 296 L162 296 C120 298 70 299.5 37 298.5 C31 293 31 282 37 277.5 Z"/>
<path d="M22 455.5 C80 455.5 180 455 230 456.5 C239 458 240 462 239.5 468 C239.5 474 237 476.5 230 477 C180 477.5 80 477.5 22 477 Z"/>
<path d="M15.5 700.5 C60 700 160 700 213 701 C215.5 702 216 718 214 723.5 C160 724.5 60 724.5 15.5 724.5 C13.5 722 13.5 703 15.5 700.5 Z"/>
</g></svg>
</body></html>
